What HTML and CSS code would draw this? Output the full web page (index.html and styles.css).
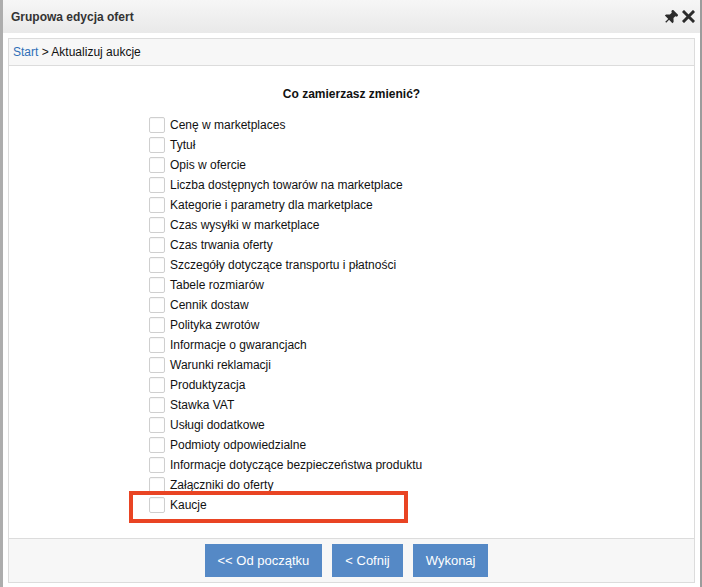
FILE: index.html
```html
<!DOCTYPE html>
<html lang="pl">
<head>
<meta charset="utf-8">
<title>Grupowa edycja ofert</title>
<link rel="stylesheet" href="styles.css">
</head>
<body>
<div class="dialog">
  <div class="header">
    <span class="title">Grupowa edycja ofert</span>
    <div class="tools">
      <svg class="pin" width="14" height="14" viewBox="0 0 16 16"><g transform="rotate(45 8 8)"><path d="M3.5 0.5h9v2.4l-1.6 1v3l3.2 3v1.9H1.9V9.9l3.2-3v-3L3.5 2.9z" fill="#2b2b2b"/><path d="M8 11V16.5" stroke="#2b2b2b" stroke-width="1.5"/></g></svg>
      <svg class="close" width="13" height="13" viewBox="0 0 13 13"><path d="M2 2L11 11M11 2L2 11" stroke="#2b2b2b" stroke-width="3" stroke-linecap="square"/></svg>
    </div>
  </div>
  <div class="panel">
    <div class="crumbs"><a class="link" href="#">Start</a> &gt; Aktualizuj aukcje</div>
    <div class="content">
      <div class="question">Co zamierzasz zmienić?</div>
      <ul class="options">
        <li class="opt"><span class="box"></span>Cenę w marketplaces</li>
        <li class="opt"><span class="box"></span>Tytuł</li>
        <li class="opt"><span class="box"></span>Opis w ofercie</li>
        <li class="opt"><span class="box"></span>Liczba dostępnych towarów na marketplace</li>
        <li class="opt"><span class="box"></span>Kategorie i parametry dla marketplace</li>
        <li class="opt"><span class="box"></span>Czas wysyłki w marketplace</li>
        <li class="opt"><span class="box"></span>Czas trwania oferty</li>
        <li class="opt"><span class="box"></span>Szczegóły dotyczące transportu i płatności</li>
        <li class="opt"><span class="box"></span>Tabele rozmiarów</li>
        <li class="opt"><span class="box"></span>Cennik dostaw</li>
        <li class="opt"><span class="box"></span>Polityka zwrotów</li>
        <li class="opt"><span class="box"></span>Informacje o gwarancjach</li>
        <li class="opt"><span class="box"></span>Warunki reklamacji</li>
        <li class="opt"><span class="box"></span>Produktyzacja</li>
        <li class="opt"><span class="box"></span>Stawka VAT</li>
        <li class="opt"><span class="box"></span>Usługi dodatkowe</li>
        <li class="opt"><span class="box"></span>Podmioty odpowiedzialne</li>
        <li class="opt"><span class="box"></span>Informacje dotyczące bezpieczeństwa produktu</li>
        <li class="opt"><span class="box"></span>Załączniki do oferty</li>
        <li class="opt highlighted"><span class="box"></span>Kaucje<span class="marker"></span></li>
      </ul>
    </div>
    <div class="footer">
      <button class="btn">&lt;&lt; Od początku</button>
      <button class="btn">&lt; Cofnij</button>
      <button class="btn">Wykonaj</button>
    </div>
  </div>
</div>
</body>
</html>
```
FILE: styles.css
```css
html, body {
  margin: 0;
  padding: 0;
  background: #ffffff;
}
body {
  font-family: "Liberation Sans", Arial, sans-serif;
  font-size: 12px;
  color: #111;
}
.dialog {
  height: 587px;
  box-sizing: border-box;
  border-left: 3px solid #adadad;
  border-right: 2px solid #9c9c9c;
  background: #fff;
  display: flex;
  flex-direction: column;
}
.header {
  height: 33px;
  flex: none;
  display: flex;
  align-items: center;
  justify-content: space-between;
  padding: 0 5px 0 8px;
  background: linear-gradient(#f6f6f6, #e9e9e9);
}
.title {
  font-weight: bold;
  font-size: 12px;
  color: #333;
}
.tools {
  display: flex;
  align-items: center;
  gap: 4px;
}
.panel {
  margin: 5px 5px 4px 5px;
  flex: 1;
  border: 1px solid #dcdcdc;
  display: flex;
  flex-direction: column;
}
.crumbs {
  height: 26px;
  line-height: 26px;
  padding-left: 4px;
  background: #f7f7f7;
  border-bottom: 1px solid #dcdcdc;
  color: #111;
}
.link {
  color: #2f6fb7;
  text-decoration: none;
}
.content {
  flex: 1;
  background: #fff;
  padding-top: 19px;
}
.question {
  text-align: center;
  font-weight: bold;
  line-height: 18px;
  color: #111;
  margin-bottom: 12px;
}
.options {
  list-style: none;
  margin: 0;
  padding: 0 0 0 140px;
}
.opt {
  position: relative;
  height: 20px;
  display: flex;
  align-items: center;
  color: #111;
}
.box {
  width: 14px;
  height: 14px;
  border: 1px solid #cfcfcf;
  border-radius: 2px;
  background: #fff;
  margin-right: 5px;
  flex: none;
  box-shadow: inset 0 1px 1px rgba(0,0,0,0.04);
}
.marker {
  position: absolute;
  left: -20px;
  top: -4px;
  width: 271px;
  height: 24px;
  border: 4px solid #e94423;
}
.footer {
  height: 43px;
  border-top: 1px solid #dcdcdc;
  background: #f7f7f7;
  display: flex;
  justify-content: center;
  align-items: center;
}
.btn {
  height: 33px;
  margin-right: 10px;
  border: none;
  background: #5589c6;
  color: #fff;
  font-family: "Liberation Sans", Arial, sans-serif;
  font-size: 13px;
  padding: 0 13px;
  cursor: pointer;
}
```
